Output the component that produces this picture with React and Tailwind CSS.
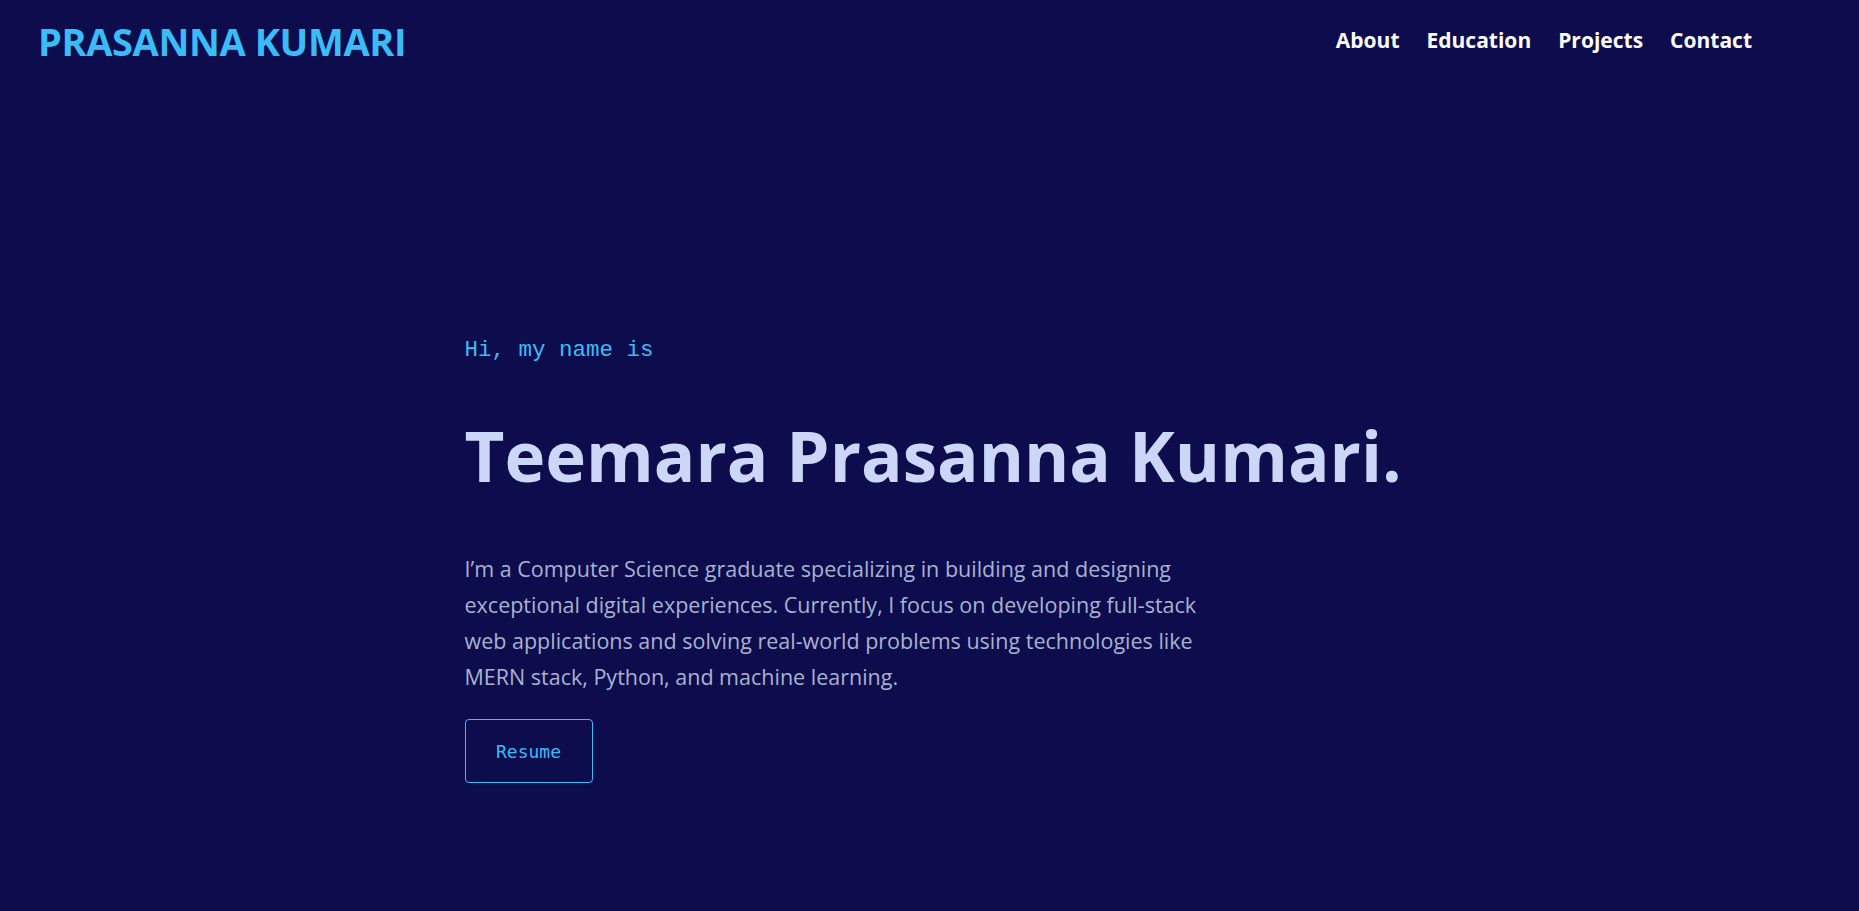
import React from 'react';

const links = ['About', 'Education', 'Projects', 'Contact'];

function Header() {
  return (
    <header className="flex h-[82px] items-center justify-between pl-[38px] pr-[107px]">
      <a href="#" className="text-[38px] font-bold tracking-[-0.01em] text-[#38bdf8]">
        PRASANNA KUMARI
      </a>
      <nav className="flex items-center gap-[27px]">
        {links.map((link) => (
          <a key={link} href={`#${link.toLowerCase()}`} className="text-[21px] font-bold text-white">
            {link}
          </a>
        ))}
      </nav>
    </header>
  );
}

function Hero() {
  return (
    <section className="mx-auto w-[930px] pt-[254px]">
      {/* intro */}
      <p className="font-['Liberation_Mono',monospace] text-[22.5px] leading-[28px] text-[#38bdf8]">
        Hi, my name is
      </p>

      <h1 className="mt-[49px] whitespace-nowrap text-[69px] font-bold leading-[84px] text-[#ccd6f6]">
        Teemara Prasanna Kumari.
      </h1>

      <p className="mt-[54px] max-w-[750px] text-[21.5px] leading-[36px] text-[#a8b2d1]">
        I’m a Computer Science graduate specializing in building and designing exceptional digital
        experiences. Currently, I focus on developing full-stack web applications and solving
        real-world problems using technologies like MERN stack, Python, and machine learning.
      </p>

      <button className="mt-[24px] h-[64px] w-[128px] rounded-[4px] border border-[#38bdf8] font-['DejaVu_Sans_Mono',monospace] text-[18px] text-[#38bdf8]">
        Resume
      </button>
    </section>
  );
}

export default function App() {
  return (
    <div className="min-h-screen bg-[#0d0c4d] font-['Open_Sans',sans-serif]">
      <Header />
      <Hero />
    </div>
  );
}
